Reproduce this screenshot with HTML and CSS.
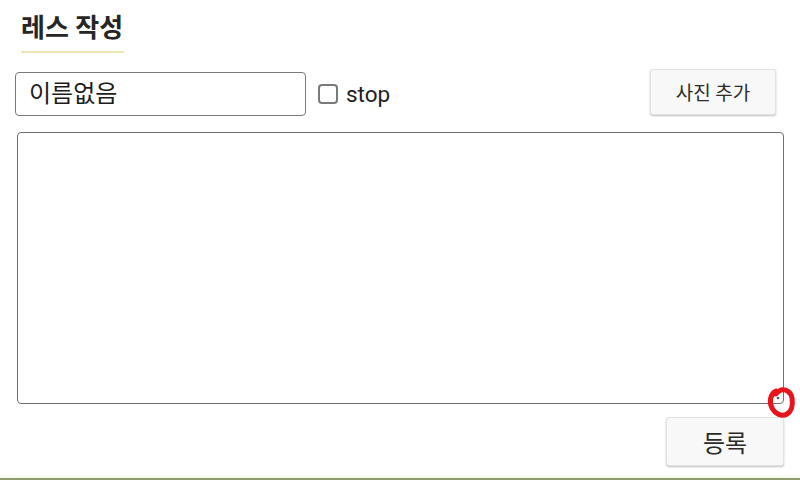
FILE: index.html
```html
<!DOCTYPE html>
<html lang="ko">
<head>
<meta charset="utf-8">
<link rel="stylesheet" href="styles.css">
</head>
<body>
<div class="page">
  <div class="title-wrap"><h1 class="title">레스 작성</h1></div>
  <div class="row">
    <div class="name-input">이름없음</div>
    <label class="stop"><span class="box"></span><span class="stop-text">stop</span></label>
    <div class="spacer"></div>
    <button class="btn btn-photo">사진 추가</button>
  </div>
  <div class="textarea-wrap">
    <div class="textarea"></div>
    <svg class="handle" width="10" height="10" viewBox="0 0 10 10"><circle cx="5" cy="5" r="1.3" fill="#555"/></svg>
    <svg class="mark" width="32" height="34" viewBox="0 0 32 34"><path d="M10 5 C4 8 3 16 6 22 C9 28 16 31 21 28 C26 25 27 18 26 12 C25 6 20 3 15 4 C13 5 11 6 10 8" fill="none" stroke="#e8131b" stroke-width="5" stroke-linecap="round"/></svg>
  </div>
  <div class="row-bottom">
    <button class="btn btn-submit">등록</button>
  </div>
</div>
<div class="footer-line"></div>
</body>
</html>
```
FILE: styles.css
```css
html, body {
  margin: 0;
  padding: 0;
  background: #ffffff;
  width: 800px;
  height: 480px;
  overflow: hidden;
  font-family: Roboto, "Noto Sans CJK KR", "Noto Sans", sans-serif;
  color: #222;
  position: relative;
}
.page {
  padding: 0 16px 0 15px;
  height: 478px;
  box-sizing: border-box;
}
.title-wrap {
  padding: 13px 0 0 6px;
  height: 62px;
  box-sizing: border-box;
}
.title {
  display: inline-block;
  margin: 0;
  font-size: 26px;
  font-weight: 700;
  color: #262626;
  line-height: 31px;
  padding: 0 1px 7px 0;
  border-bottom: 2px solid #ece6b6;
}
.row {
  display: flex;
  align-items: center;
  height: 46px;
  margin-top: 9px;
}
.name-input {
  width: 291px;
  height: 44px;
  box-sizing: border-box;
  border: 1px solid #7a7a7a;
  border-radius: 4px;
  padding-left: 13px;
  font-size: 24px;
  line-height: 42px;
  color: #1c1c1c;
}
.stop {
  display: flex;
  align-items: center;
  margin-left: 12px;
}
.box {
  width: 20px;
  height: 20px;
  border: 2px solid #7a7a7a;
  border-radius: 4px;
  box-sizing: border-box;
  display: inline-block;
}
.stop-text {
  margin-left: 8px;
  font-size: 22.5px;
  color: #1e1e1e;
  line-height: 24px;
}
.spacer { flex: 1; }
.btn {
  font-family: Roboto, "Noto Sans CJK KR", sans-serif;
  background: #f8f8f8;
  border: 1px solid #e2e2e2;
  border-radius: 3px;
  box-shadow: 0 1px 2px rgba(0,0,0,0.25);
  color: #2b2b2b;
  padding: 0;
}
.btn-photo {
  width: 126px;
  height: 46px;
  font-size: 19px;
  margin-right: 8px;
  margin-top: -5px;
}
.textarea-wrap {
  position: relative;
  margin: 15px 0 0 2px;
  width: 767px;
  height: 272px;
}
.textarea {
  width: 100%;
  height: 100%;
  box-sizing: border-box;
  border: 1px solid #707070;
  border-radius: 4px;
}
.handle {
  position: absolute;
  right: 1px;
  bottom: 1px;
}
.mark {
  position: absolute;
  right: -14px;
  bottom: -16px;
}
.row-bottom {
  display: flex;
  justify-content: flex-end;
  margin-top: 13px;
}
.btn-submit {
  width: 118px;
  height: 49px;
  font-size: 24px;
}
.footer-line {
  position: absolute;
  left: 0;
  right: 0;
  bottom: 0;
  height: 2px;
  background: #8f9e6c;
  box-shadow: 0 -2px 2px #f1f6e6;
}
```
